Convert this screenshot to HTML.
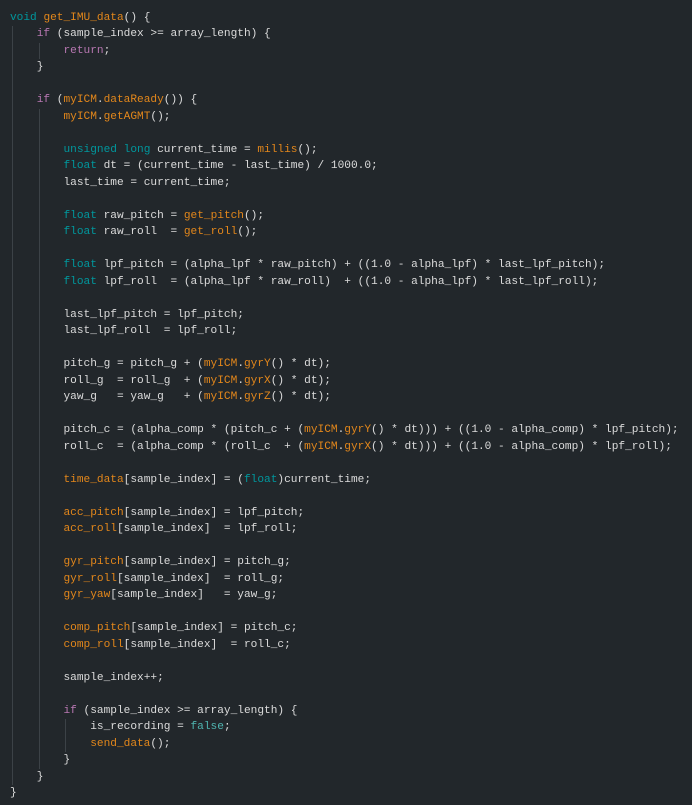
<!DOCTYPE html>
<html><head><meta charset="utf-8"><style>
html,body{margin:0;padding:0;background:#22272b;width:692px;height:805px;overflow:hidden}
pre{margin:0;padding:9.5px 0 0 10px;font-family:"Liberation Mono",monospace;font-size:11.15px;line-height:16.5px;color:#dcdcdc}
.i{display:inline-block;width:4ch;height:16.5px;vertical-align:top;box-sizing:border-box;border-left:1px solid #3c4247;position:relative;left:2px}
.k{color:#00979d}.p{color:#b877b2}.f{color:#e3871b}.b{color:#4fb5b0}
</style></head><body><pre><span class="k">void</span> <span class="f">get_IMU_data</span>() {
<span class="i"></span><span class="p">if</span> (sample_index &gt;= array_length) {
<span class="i"></span><span class="i"></span><span class="p">return</span>;
<span class="i"></span>}
<span class="i"></span>
<span class="i"></span><span class="p">if</span> (<span class="f">myICM</span>.<span class="f">dataReady</span>()) {
<span class="i"></span><span class="i"></span><span class="f">myICM</span>.<span class="f">getAGMT</span>();
<span class="i"></span><span class="i"></span>
<span class="i"></span><span class="i"></span><span class="k">unsigned</span> <span class="k">long</span> current_time = <span class="f">millis</span>();
<span class="i"></span><span class="i"></span><span class="k">float</span> dt = (current_time - last_time) / 1000.0;
<span class="i"></span><span class="i"></span>last_time = current_time;
<span class="i"></span><span class="i"></span>
<span class="i"></span><span class="i"></span><span class="k">float</span> raw_pitch = <span class="f">get_pitch</span>();
<span class="i"></span><span class="i"></span><span class="k">float</span> raw_roll  = <span class="f">get_roll</span>();
<span class="i"></span><span class="i"></span>
<span class="i"></span><span class="i"></span><span class="k">float</span> lpf_pitch = (alpha_lpf * raw_pitch) + ((1.0 - alpha_lpf) * last_lpf_pitch);
<span class="i"></span><span class="i"></span><span class="k">float</span> lpf_roll  = (alpha_lpf * raw_roll)  + ((1.0 - alpha_lpf) * last_lpf_roll);
<span class="i"></span><span class="i"></span>
<span class="i"></span><span class="i"></span>last_lpf_pitch = lpf_pitch;
<span class="i"></span><span class="i"></span>last_lpf_roll  = lpf_roll;
<span class="i"></span><span class="i"></span>
<span class="i"></span><span class="i"></span>pitch_g = pitch_g + (<span class="f">myICM</span>.<span class="f">gyrY</span>() * dt);
<span class="i"></span><span class="i"></span>roll_g  = roll_g  + (<span class="f">myICM</span>.<span class="f">gyrX</span>() * dt);
<span class="i"></span><span class="i"></span>yaw_g   = yaw_g   + (<span class="f">myICM</span>.<span class="f">gyrZ</span>() * dt);
<span class="i"></span><span class="i"></span>
<span class="i"></span><span class="i"></span>pitch_c = (alpha_comp * (pitch_c + (<span class="f">myICM</span>.<span class="f">gyrY</span>() * dt))) + ((1.0 - alpha_comp) * lpf_pitch);
<span class="i"></span><span class="i"></span>roll_c  = (alpha_comp * (roll_c  + (<span class="f">myICM</span>.<span class="f">gyrX</span>() * dt))) + ((1.0 - alpha_comp) * lpf_roll);
<span class="i"></span><span class="i"></span>
<span class="i"></span><span class="i"></span><span class="f">time_data</span>[sample_index] = (<span class="k">float</span>)current_time;
<span class="i"></span><span class="i"></span>
<span class="i"></span><span class="i"></span><span class="f">acc_pitch</span>[sample_index] = lpf_pitch;
<span class="i"></span><span class="i"></span><span class="f">acc_roll</span>[sample_index]  = lpf_roll;
<span class="i"></span><span class="i"></span>
<span class="i"></span><span class="i"></span><span class="f">gyr_pitch</span>[sample_index] = pitch_g;
<span class="i"></span><span class="i"></span><span class="f">gyr_roll</span>[sample_index]  = roll_g;
<span class="i"></span><span class="i"></span><span class="f">gyr_yaw</span>[sample_index]   = yaw_g;
<span class="i"></span><span class="i"></span>
<span class="i"></span><span class="i"></span><span class="f">comp_pitch</span>[sample_index] = pitch_c;
<span class="i"></span><span class="i"></span><span class="f">comp_roll</span>[sample_index]  = roll_c;
<span class="i"></span><span class="i"></span>
<span class="i"></span><span class="i"></span>sample_index++;
<span class="i"></span><span class="i"></span>
<span class="i"></span><span class="i"></span><span class="p">if</span> (sample_index &gt;= array_length) {
<span class="i"></span><span class="i"></span><span class="i"></span>is_recording = <span class="b">false</span>;
<span class="i"></span><span class="i"></span><span class="i"></span><span class="f">send_data</span>();
<span class="i"></span><span class="i"></span>}
<span class="i"></span>}
}</pre>
</body></html>
